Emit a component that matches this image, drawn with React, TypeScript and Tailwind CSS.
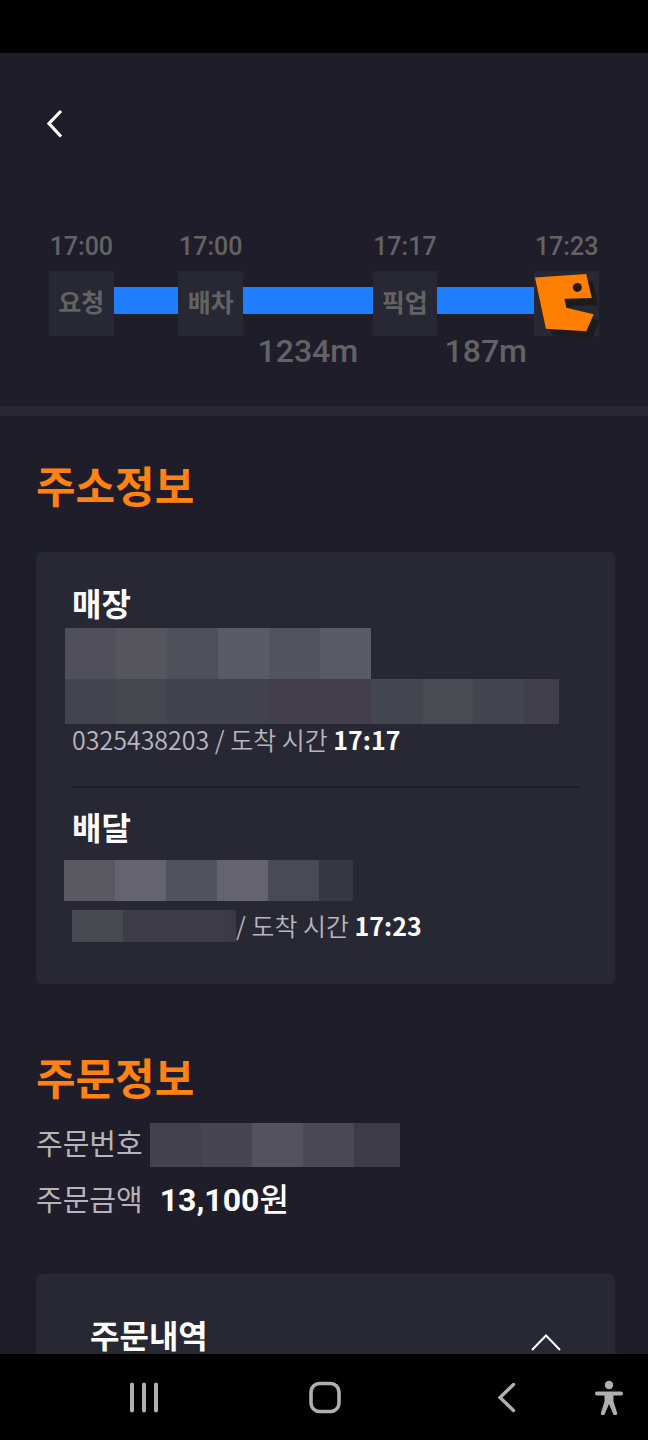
import React, { useState } from 'react';

type Stop = { label: string; time: string };

const MaskRow: React.FC<{ tiles: string[]; className?: string }> = ({ tiles, className = '' }) => (
  <div className={`flex ${className}`} aria-hidden="true">
    {tiles.map((tile, i) => (
      <span key={i} className={`block h-full ${tile}`} />
    ))}
  </div>
);

const TimelineStop: React.FC<{ stop: Stop; children?: React.ReactNode }> = ({ stop, children }) => (
  <li className="flex min-w-0 flex-col">
    <time className="flex justify-center whitespace-nowrap font-[Roboto,sans-serif] text-[25px] leading-8 font-medium">
      {stop.time}
    </time>
    <div className="relative mt-2 flex aspect-square items-center justify-center bg-[#272833] pb-1 text-[25px] leading-8 font-bold whitespace-nowrap">
      {children ?? stop.label}
    </div>
  </li>
);

const TimelineBar: React.FC<{ distance?: string }> = ({ distance }) => (
  <li className="flex min-w-0 flex-col pt-14">
    <div className="h-[27px] bg-[#1f7dff]" />
    {distance && (
      <span className="mt-5 flex justify-center font-[Roboto,sans-serif] text-[32px] leading-[34px] font-medium">
        {distance}
      </span>
    )}
  </li>
);

const Mascot: React.FC = () => (
  <svg className="absolute inset-0 h-full w-full overflow-visible" viewBox="-1 0 65 65" role="img" aria-label="전달">
    <path
      d="M50 9 L58 10.500 L63.500 34.500 L36 35.500 L38 42 L64.500 50 L58 67.500 L17 64.500 L16 56 Z"
      fill="#1c1c1b"
    />
    <path d="M29.500 28 L57 27 L59 34 L63 35 L60 42.500 L50 41.500 L31.500 37 Z" fill="#1c1c1b" />
    <path d="M40 35 L64 35 L64 49.500 L59 43.500 L33 37 Z" fill="#272833" />
    <path
      d="M0 6.500 L51.500 3 L57 27 L29.500 28 L31.500 37 L59 43.500 L51.500 60.500 L11 58 Z"
      fill="#ff8000"
    />
    <circle cx="42.500" cy="16.500" r="4.500" fill="#211c1a" />
  </svg>
);

const Timeline: React.FC = () => (
  <ol className="grid grid-cols-[2fr_2fr_2fr_4fr_2fr_3fr_2fr] px-[49px] pb-[38px] text-[#636364]">
    <TimelineStop stop={{ label: '요청', time: '17:00' }} />
    <TimelineBar />
    <TimelineStop stop={{ label: '배차', time: '17:00' }} />
    <TimelineBar distance="1234m" />
    <TimelineStop stop={{ label: '픽업', time: '17:17' }} />
    <TimelineBar distance="187m" />
    <TimelineStop stop={{ label: '전달', time: '17:23' }}>
      <Mascot />
    </TimelineStop>
  </ol>
);

const SystemNav: React.FC = () => (
  <nav className="flex h-[86px] shrink-0 items-center bg-black text-[#b0b0b0]">
    <div className="flex flex-1 items-center justify-between pl-[126px] pr-[3px]">
      <button type="button" aria-label="최근 앱">
        <svg className="h-9 w-9" viewBox="0 0 36 36" fill="none" stroke="currentColor" strokeWidth="4" strokeLinecap="round">
          <path d="M6 5.500v26M18 5.500v26M30 5.500v26" />
        </svg>
      </button>
      <button type="button" aria-label="홈">
        <svg className="h-9 w-9" viewBox="0 0 36 36" fill="none" stroke="currentColor" strokeWidth="3.600">
          <rect x="4" y="4.500" width="28" height="28" rx="8.500" />
        </svg>
      </button>
      <button type="button" aria-label="뒤로">
        <svg className="h-9 w-9" viewBox="0 0 36 36" fill="none" stroke="currentColor" strokeWidth="3.400" strokeLinecap="round">
          <path d="M25.500 5.500 12 18.500l13.500 13" />
        </svg>
      </button>
    </div>
    <button type="button" aria-label="접근성" className="ml-[64px] mr-[21px]">
      <svg className="h-9 w-9" viewBox="0 0 36 36" fill="currentColor">
        <circle cx="18" cy="6" r="4.200" />
        <path d="M6 12.500h24a2 2 0 0 1 0 4h-7.500v6l3.500 11a2 2 0 0 1-3.800 1.500L18 25 13.800 35A2 2 0 0 1 10 33.500l3.500-11v-6H6a2 2 0 0 1 0-4z" />
      </svg>
    </button>
  </nav>
);

const App: React.FC = () => {
  const [open, setOpen] = useState(true);

  return (
    <div className="flex h-screen flex-col bg-[#201d2a] font-['Noto_Sans_CJK_KR',sans-serif] text-white">
      <div className="h-[53px] shrink-0 bg-black" />

      <main className="min-h-0 flex-1 overflow-y-auto [scrollbar-width:none]">
        <header className="px-9 pt-[53px] pb-[89px]">
          <button type="button" aria-label="뒤로 가기" className="block">
            <svg className="h-9 w-9" viewBox="0 0 36 36" fill="none" stroke="currentColor" strokeWidth="3.200">
              <path d="M25 5 13 17.500l12 13" />
            </svg>
          </button>
        </header>

        <Timeline />
        <div className="h-[10px] bg-[#272833]" />

        <section className="pt-9 pr-[33px] pl-9">
          <h2 className="text-[43px] leading-[64px] font-bold text-[#ff8213]">주소정보</h2>

          <div className="mt-9 rounded-md bg-[#272833] px-9 pt-7 pb-[42px]">
            <h3 className="text-[32px] leading-[44px] font-bold">매장</h3>
            <MaskRow
              className="mt-1 -ml-[7px] h-[51px]"
              tiles={[
                'w-[51px] bg-[#504f5a]',
                'w-[51px] bg-[#56545d]',
                'w-[51px] bg-[#4d5059]',
                'w-[51px] bg-[#595c65]',
                'w-[51px] bg-[#51545d]',
                'w-[51px] bg-[#595c64]',
              ]}
            />
            <MaskRow
              className="-ml-[7px] h-[45px]"
              tiles={[
                'w-[51px] bg-[#42444f]',
                'w-[51px] bg-[#45484f]',
                'w-[102px] bg-[#41424d]',
                'w-[102px] bg-[#423f4a]',
                'w-[51px] bg-[#43454f]',
                'w-[51px] bg-[#484b52]',
                'w-[51px] bg-[#42444e]',
                'w-[35px] bg-[#413f49]',
              ]}
            />
            <p className="text-[25px] leading-[30px] font-[350] text-[#b7b7bc]">
              0325438203 / 도착 시간 <time className="font-bold text-white">17:17</time>
            </p>

            <hr className="mt-8 mb-4 border-t-2 border-[#1f1e29]" />

            <h3 className="text-[32px] leading-[44px] font-bold">배달</h3>
            <MaskRow
              className="mt-3 -ml-2 h-[41px]"
              tiles={[
                'w-[51px] bg-[#595861]',
                'w-[51px] bg-[#65646e]',
                'w-[51px] bg-[#50535b]',
                'w-[51px] bg-[#65646e]',
                'w-[51px] bg-[#484a55]',
                'w-[34px] bg-[#363742]',
              ]}
            />
            <div className="mt-[9px] flex items-start">
              <MaskRow
                className="h-8"
                tiles={['w-[51px] bg-[#464950]', 'w-[102px] bg-[#3e3c47]', 'w-[11px] bg-[#3b3944]']}
              />
              <p className="text-[25px] leading-[30px] font-[350] text-[#b7b7bc]">
                / 도착 시간 <time className="font-bold text-white">17:23</time>
              </p>
            </div>
          </div>
        </section>

        <section className="pt-[60px] pr-[33px] pl-9">
          <h2 className="text-[43px] leading-[64px] font-bold text-[#ff8213]">주문정보</h2>

          <dl className="mt-[15px]">
            <div className="flex items-start">
              <dt className="text-[29px] leading-[38px] text-[#b5b4b8]">주문번호</dt>
              <dd className="ml-[7px]">
                <MaskRow
                  className="h-11"
                  tiles={[
                    'w-[51px] bg-[#43414c]',
                    'w-[51px] bg-[#474550]',
                    'w-[51px] bg-[#54525c]',
                    'w-[51px] bg-[#4a4853]',
                    'w-[46px] bg-[#3d3b46]',
                  ]}
                />
              </dd>
            </div>
            <div className="mt-3 flex items-start">
              <dt className="text-[29px] leading-[38px] text-[#b5b4b8]">주문금액</dt>
              <dd className="ml-[17px] font-[Roboto,'Noto_Sans_CJK_KR',sans-serif] text-[32px] leading-[42px] font-bold">
                13,100<span className="font-medium">원</span>
              </dd>
            </div>
          </dl>

          <div className="mt-[53px] rounded-md bg-[#272833] px-[54px] pt-9 pb-10">
            <button
              type="button"
              aria-expanded={open}
              onClick={() => setOpen(!open)}
              className="flex w-full items-center justify-between text-[32px] leading-9 font-bold"
            >
              주문내역
              <svg
                className={`mt-[18px] h-[30px] w-[30px] ${open ? '' : 'rotate-180'}`}
                viewBox="0 0 30 30"
                fill="none"
                stroke="currentColor"
                strokeWidth="2"
              >
                <path d="M1 22 15 7.500l14 14.500" />
              </svg>
            </button>
          </div>
        </section>
      </main>

      <SystemNav />
    </div>
  );
};

export default App;
